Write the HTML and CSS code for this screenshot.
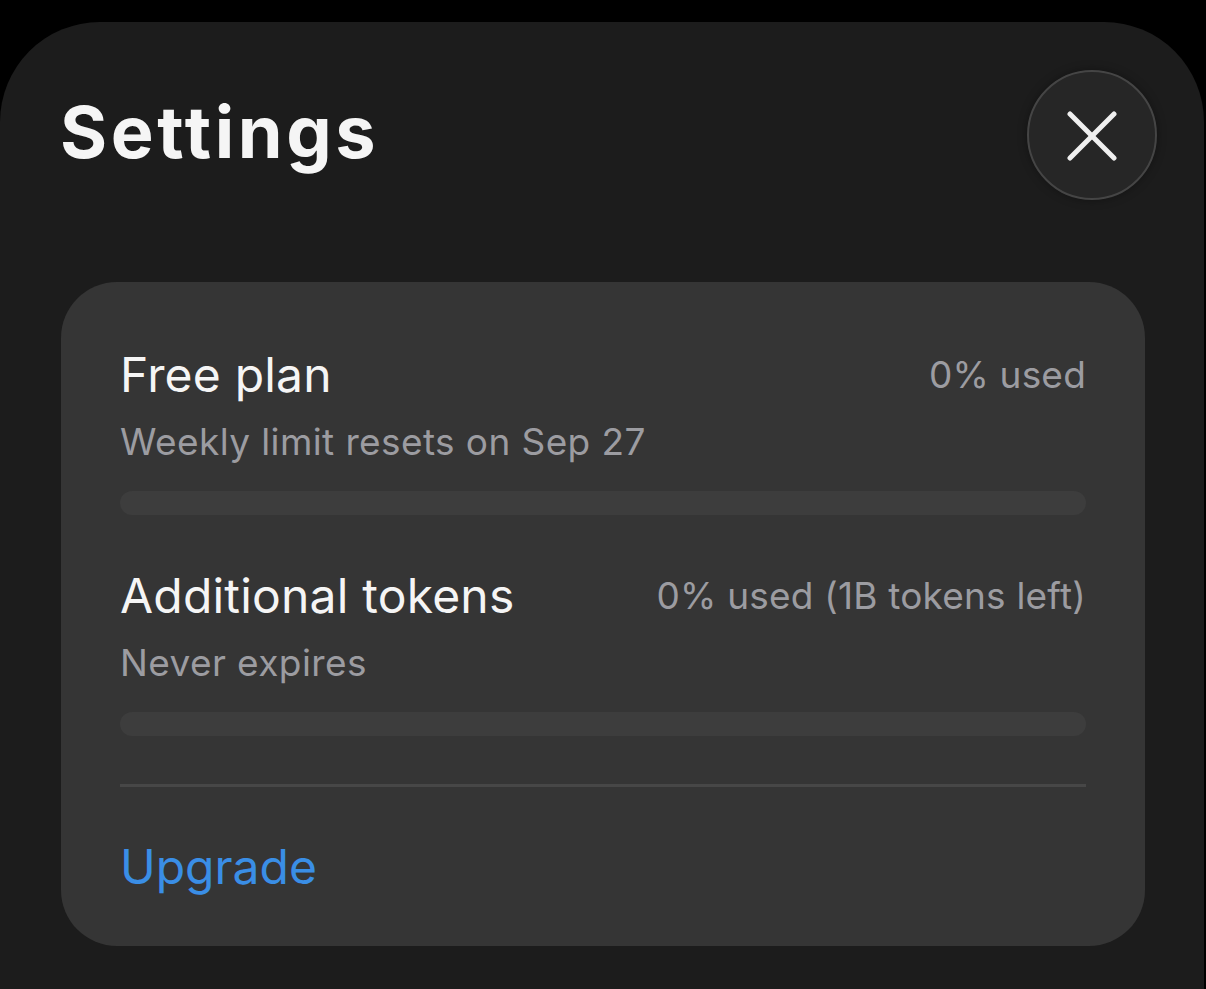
FILE: index.html
```html
<!DOCTYPE html>
<html lang="en">
<head>
<meta charset="utf-8">
<title>Settings</title>
<link rel="stylesheet" href="styles.css">
</head>
<body>
<div class="sheet">
  <header class="header">
    <h1 class="title">Settings</h1>
    <button class="close" aria-label="Close">
      <svg width="50" height="50" viewBox="0 0 50 50" aria-hidden="true">
        <line x1="3" y1="3" x2="47" y2="47" stroke="#efefef" stroke-width="5" stroke-linecap="round"/>
        <line x1="47" y1="3" x2="3" y2="47" stroke="#efefef" stroke-width="5" stroke-linecap="round"/>
      </svg>
    </button>
  </header>
  <section class="card">
    <div class="usage">
      <div class="row">
        <span class="label">Free plan</span>
        <span class="value">0% used</span>
      </div>
      <div class="sub">Weekly limit resets on Sep 27</div>
      <div class="bar"><div class="fill" style="width:0%"></div></div>
    </div>
    <div class="usage second">
      <div class="row">
        <span class="label">Additional tokens</span>
        <span class="value">0% used (1B tokens left)</span>
      </div>
      <div class="sub">Never expires</div>
      <div class="bar"><div class="fill" style="width:0%"></div></div>
    </div>
    <div class="divider"></div>
    <a class="upgrade" href="#">Upgrade</a>
  </section>
</div>
</body>
</html>
```

FILE: styles.css
```css
* { box-sizing: border-box; }
html, body {
  margin: 0;
  padding: 0;
  background: #000;
  height: 100%;
}
body {
  font-family: Inter, "Noto Sans", "Liberation Sans", sans-serif;
  color: #f5f5f5;
  overflow: hidden;
}
.sheet {
  margin-top: 22px;
  width: 1204px;
  height: 967px;
  background: #1c1c1c;
  border-radius: 100px 100px 0 0;
}
.header {
  display: flex;
  justify-content: space-between;
  align-items: flex-start;
  padding: 48px 47px 0 60px;
}
.title {
  margin: 22px 0 0;
  font-size: 72px;
  line-height: 80px;
  font-weight: 700;
  letter-spacing: 3.6px;
  color: #f5f5f5;
}
.close {
  width: 130px;
  height: 130px;
  border-radius: 50%;
  background: #262626;
  border: 2px solid #454545;
  box-shadow: 0 0 10px rgba(0,0,0,0.35);
  display: flex;
  align-items: center;
  justify-content: center;
  padding: 0;
  cursor: pointer;
}
.close svg { display: block; margin: 1px 0 0 -1px; }
.card {
  margin: 82px 59px 0 61px;
  background: #353535;
  border-radius: 56px;
  padding: 64px 59px 50px 59px;
}
.usage.second { margin-top: 52px; }
.row {
  display: flex;
  justify-content: space-between;
  align-items: center;
  height: 58px;
}
.label {
  font-size: 48px;
  line-height: 58px;
  letter-spacing: 0.2px;
  color: #f5f5f5;
}
.value {
  font-size: 37px;
  line-height: 58px;
  letter-spacing: 0.2px;
  color: #9c9ca1;
}
.sub {
  margin-top: 16px;
  font-size: 37px;
  line-height: 44px;
  letter-spacing: 0.4px;
  color: #9c9ca1;
}
.bar {
  margin-top: 27px;
  height: 24px;
  border-radius: 12px;
  background: #3d3d3d;
  overflow: hidden;
}
.fill {
  height: 100%;
  background: #3a8ee6;
}
.divider {
  margin-top: 48px;
  height: 3px;
  background: #474747;
}
.upgrade {
  display: block;
  margin-top: 51px;
  font-size: 48px;
  line-height: 58px;
  color: #3a8ee6;
  text-decoration: none;
}
```
